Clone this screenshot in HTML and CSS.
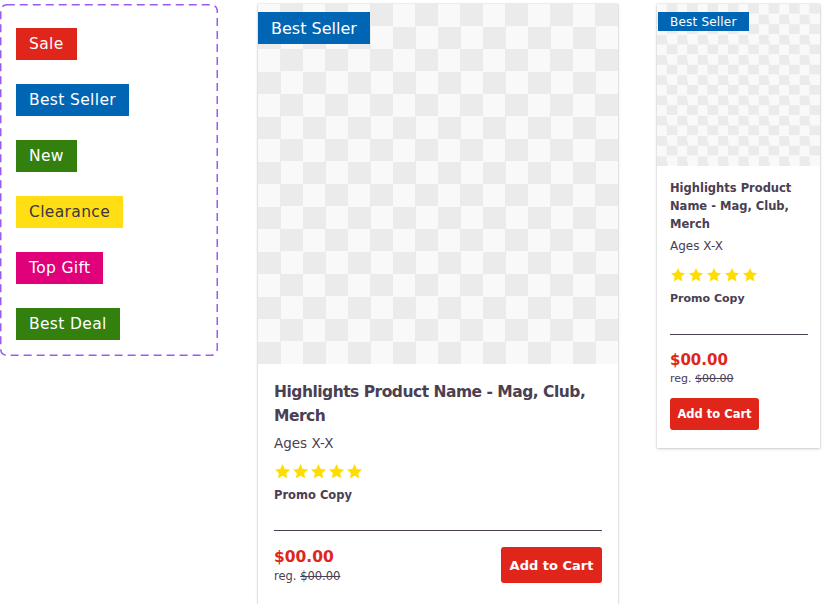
FILE: index.html
```html
<!DOCTYPE html>
<html>
<head>
<meta charset="utf-8">
<link rel="stylesheet" href="styles.css">
</head>
<body>
<div class="page">
  <div class="badge-panel">
    <span class="badge sale">Sale</span>
    <span class="badge best-seller">Best Seller</span>
    <span class="badge new">New</span>
    <span class="badge clearance">Clearance</span>
    <span class="badge top-gift">Top Gift</span>
    <span class="badge best-deal">Best Deal</span>
  </div>

  <div class="card card-lg">
    <div class="media">
      <span class="flag">Best Seller</span>
    </div>
    <div class="body">
      <h2 class="title">Highlights Product Name - Mag, Club, Merch</h2>
      <div class="ages">Ages X-X</div>
      <div class="stars">
        <svg viewBox="0 0 24 24"><path d="M12 1.5l3.2 6.9 7.5.8-5.6 5.1 1.6 7.4L12 17.9l-6.6 3.8 1.6-7.4-5.6-5.1 7.5-.8z"/></svg>
        <svg viewBox="0 0 24 24"><path d="M12 1.5l3.2 6.9 7.5.8-5.6 5.1 1.6 7.4L12 17.9l-6.6 3.8 1.6-7.4-5.6-5.1 7.5-.8z"/></svg>
        <svg viewBox="0 0 24 24"><path d="M12 1.5l3.2 6.9 7.5.8-5.6 5.1 1.6 7.4L12 17.9l-6.6 3.8 1.6-7.4-5.6-5.1 7.5-.8z"/></svg>
        <svg viewBox="0 0 24 24"><path d="M12 1.5l3.2 6.9 7.5.8-5.6 5.1 1.6 7.4L12 17.9l-6.6 3.8 1.6-7.4-5.6-5.1 7.5-.8z"/></svg>
        <svg viewBox="0 0 24 24"><path d="M12 1.5l3.2 6.9 7.5.8-5.6 5.1 1.6 7.4L12 17.9l-6.6 3.8 1.6-7.4-5.6-5.1 7.5-.8z"/></svg>
      </div>
      <div class="promo">Promo Copy</div>
      <hr class="divider">
      <div class="buy">
        <div class="prices">
          <div class="price">$00.00</div>
          <div class="reg">reg. <s>$00.00</s></div>
        </div>
        <button class="cart">Add to Cart</button>
      </div>
    </div>
  </div>

  <div class="card card-sm">
    <div class="media">
      <span class="flag">Best Seller</span>
    </div>
    <div class="body">
      <h2 class="title">Highlights Product Name - Mag, Club, Merch</h2>
      <div class="ages">Ages X-X</div>
      <div class="stars">
        <svg viewBox="0 0 24 24"><path d="M12 1.5l3.2 6.9 7.5.8-5.6 5.1 1.6 7.4L12 17.9l-6.6 3.8 1.6-7.4-5.6-5.1 7.5-.8z"/></svg>
        <svg viewBox="0 0 24 24"><path d="M12 1.5l3.2 6.9 7.5.8-5.6 5.1 1.6 7.4L12 17.9l-6.6 3.8 1.6-7.4-5.6-5.1 7.5-.8z"/></svg>
        <svg viewBox="0 0 24 24"><path d="M12 1.5l3.2 6.9 7.5.8-5.6 5.1 1.6 7.4L12 17.9l-6.6 3.8 1.6-7.4-5.6-5.1 7.5-.8z"/></svg>
        <svg viewBox="0 0 24 24"><path d="M12 1.5l3.2 6.9 7.5.8-5.6 5.1 1.6 7.4L12 17.9l-6.6 3.8 1.6-7.4-5.6-5.1 7.5-.8z"/></svg>
        <svg viewBox="0 0 24 24"><path d="M12 1.5l3.2 6.9 7.5.8-5.6 5.1 1.6 7.4L12 17.9l-6.6 3.8 1.6-7.4-5.6-5.1 7.5-.8z"/></svg>
      </div>
      <div class="promo">Promo Copy</div>
      <hr class="divider">
      <div class="buy">
        <div class="prices">
          <div class="price">$00.00</div>
          <div class="reg">reg. <s>$00.00</s></div>
        </div>
        <button class="cart">Add to Cart</button>
      </div>
    </div>
  </div>
</div>
</body>
</html>
```

FILE: styles.css
```css
* { box-sizing: border-box; }
html, body { margin: 0; padding: 0; background: #fff; }
body {
  font-family: "DejaVu Sans", "Noto Sans", sans-serif;
  color: #4a4052;
}
.page {
  display: flex;
  align-items: flex-start;
  padding-top: 4px;
}

/* badge panel */
.badge-panel {
  width: 218px;
  height: 352px;
  background-image: url("data:image/svg+xml,%3Csvg xmlns='http://www.w3.org/2000/svg' width='218' height='352'%3E%3Crect x='0.75' y='0.75' width='216.5' height='350.5' rx='6' ry='6' fill='none' stroke='%239a5cf0' stroke-width='1.5' stroke-dasharray='8 5'/%3E%3C/svg%3E");
  background-repeat: no-repeat;
  padding: 24px 0 0 16px;
  display: flex;
  flex-direction: column;
  align-items: flex-start;
  gap: 24px;
}
.badge {
  display: inline-flex;
  align-items: center;
  height: 32px;
  padding: 0 13px;
  font-size: 15.5px;
  line-height: 1;
  padding-top: 1px;
  color: #fff;
  letter-spacing: 0.35px;
}
.sale { background: #e0251b; }
.best-seller { background: #0065b3; }
.new { background: #33800f; }
.clearance { background: #ffde14; color: #3d3445; }
.top-gift { background: #e0007a; }
.best-deal { background: #33800f; }

/* cards */
.card {
  background: #fff;
  box-shadow: 0 0 1px rgba(0,0,0,0.25), 0 1px 3px rgba(0,0,0,0.18);
  display: flex;
  flex-direction: column;
}
.card-lg { width: 360px; height: 600px; margin-left: 40px; }
.card-sm { width: 163px; height: 444px; margin-left: 39px; }

.media {
  position: relative;
  background-color: #f9f9f9;
  background-image: repeating-conic-gradient(#ebebeb 0 25%, #f9f9f9 0 50%);
}
.card-lg .media { height: 360px; background-size: 45px 45px; }
.card-sm .media { height: 162px; background-size: 20.375px 20.25px; }

.flag {
  position: absolute;
  left: 0;
  background: #0065b3;
  color: #fff;
  display: flex;
  align-items: center;
}
.card-lg .flag { top: 8px; height: 32px; padding: 0 13px; font-size: 16px; }
.card-sm .flag { top: 8px; height: 19px; padding: 0 12px; font-size: 12px; left: 1px; letter-spacing: 0.2px; }

.body { display: flex; flex-direction: column; }
.card-lg .body { padding: 16px 16px 0 16px; }
.card-sm .body { padding: 13px 12px 0 13px; }

.title { margin: 0; font-weight: 700; color: #4a4052; }
.card-lg .title { font-size: 15.5px; line-height: 24px; letter-spacing: -0.5px; }
.card-sm .title { font-size: 11.5px; line-height: 18px; }

.ages { color: #4a4052; }
.card-lg .ages { font-size: 13.5px; margin-top: 5px; line-height: 20px; }
.card-sm .ages { font-size: 12px; margin-top: 4px; line-height: 18px; }

.stars { display: flex; }
.stars svg { fill: #ffdd00; display: block; }
.card-lg .stars { margin-top: 10px; gap: 1px; }
.card-lg .stars svg { width: 17px; height: 17px; }
.card-sm .stars { margin-top: 12px; gap: 2px; }
.card-sm .stars svg { width: 16px; height: 16px; }

.promo { font-weight: 700; }
.card-lg .promo { font-size: 11.5px; margin-top: 7px; line-height: 16px; }
.card-sm .promo { font-size: 11px; margin-top: 8px; line-height: 16px; }

.divider { border: 0; border-top: 1px solid #4a4052; margin: 0; width: 100%; }
.card-lg .divider { margin-top: 27px; }
.card-sm .divider { margin-top: 27px; }

.buy { display: flex; }
.card-lg .buy { justify-content: space-between; align-items: flex-start; margin-top: 16px; }
.card-sm .buy { flex-direction: column; align-items: flex-start; margin-top: 15px; }

.price { color: #e0251b; font-weight: 700; }
.card-lg .price { font-size: 15.5px; line-height: 20px; }
.card-sm .price { font-size: 15px; line-height: 20px; }
.reg { color: #4a4052; }
.card-lg .reg { font-size: 11.5px; line-height: 16px; margin-top: 1px; }
.card-sm .reg { font-size: 11px; line-height: 16px; margin-top: 1px; }

.cart {
  border: 0;
  background: #e0251b;
  color: #fff;
  font-family: inherit;
  font-weight: 700;
  border-radius: 3px;
  padding: 0;
}
.card-lg .cart { width: 101px; height: 36px; font-size: 13px; }
.card-sm .cart { width: 89px; height: 32px; font-size: 11.5px; margin-top: 11px; }
```
